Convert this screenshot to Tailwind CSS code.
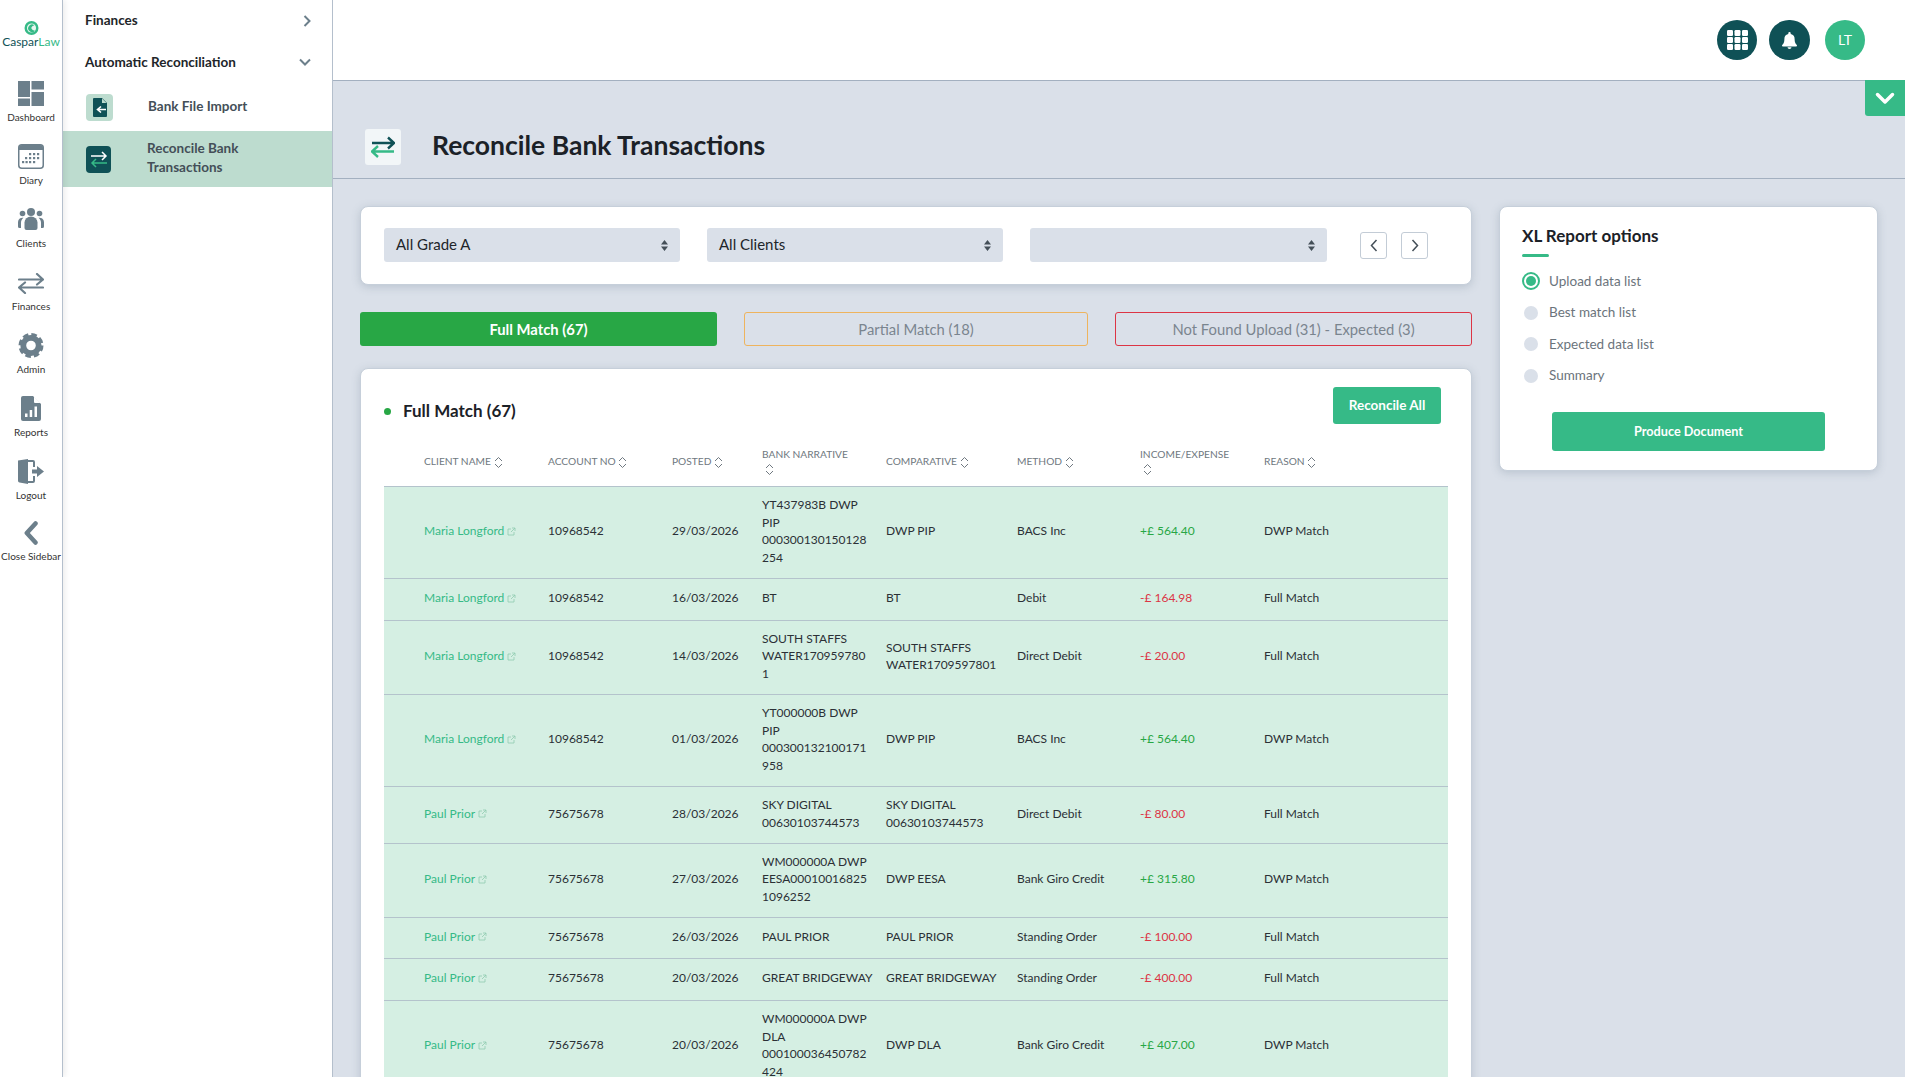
<!DOCTYPE html>
<html lang="en">
<head>
    <meta charset="UTF-8">
    <title>Reconcile Bank Transactions - CasparLaw</title>
    <script src="https://cdn.jsdelivr.net/npm/@tailwindcss/browser@4"></script>
</head>
<body class="h-screen overflow-hidden bg-[#dae0e9] font-['Lato','Noto_Sans',sans-serif] text-[#212529]">
<div class="flex h-full">

    <!-- icon rail -->
    <nav class="relative z-10 w-[63px] shrink-0 bg-white border-r border-[#b4bfcc] shadow-[2px_0_6px_rgba(0,0,0,0.08)] flex flex-col items-center text-[10px] leading-[13px] text-[#333] whitespace-nowrap">
        <svg class="mt-[21px] w-[15px] h-[14px]" viewBox="0 0 20 20">
            <circle cx="10" cy="10" r="10" fill="#36ba87"/>
            <circle cx="10" cy="10" r="6.500" fill="#e8f6f0"/>
            <path d="M14 6a5.500 5.500 0 1 0 1 8 6.500 6.500 0 0 1-5.500-4A6 6 0 0 1 14 6z" fill="#36ba87"/>
        </svg>
        <div class="text-[12px] leading-[14px] text-[#0f5156]">Caspar<span class="text-[#36ba87]">Law</span></div>

        <svg class="mt-[32px] w-[26px] h-[25px]" viewBox="0 0 26 25" fill="#6c7f8b">
            <rect width="12" height="16"/><rect y="17.500" width="12" height="7.500"/><rect x="13.500" width="12.500" height="8.500"/><rect x="13.500" y="11" width="12.500" height="14"/>
        </svg>
        <div class="mt-[5px]">Dashboard</div>

        <svg class="mt-[20px] w-[26px] h-[25px]" viewBox="0 0 26 25">
            <rect x="0.750" y="0.750" width="24.500" height="23.500" rx="3" fill="#fff" stroke="#6c7f8b" stroke-width="1.500"/>
            <path d="M1 4a3 3 0 0 1 3-3h18a3 3 0 0 1 3 3v2H1z" fill="#6c7f8b"/>
            <g fill="#6c7f8b"><rect x="11" y="9" width="2.200" height="2.200"/><rect x="15" y="9" width="2.200" height="2.200"/><rect x="19" y="9" width="2.200" height="2.200"/><rect x="7" y="13" width="2.200" height="2.200"/><rect x="11" y="13" width="2.200" height="2.200"/><rect x="15" y="13" width="2.200" height="2.200"/><rect x="19" y="13" width="2.200" height="2.200"/><rect x="4" y="17" width="2.200" height="2.200"/><rect x="7.500" y="17" width="2.200" height="2.200"/><rect x="11" y="17" width="2.200" height="2.200"/><rect x="15" y="17" width="2.200" height="2.200"/></g>
        </svg>
        <div class="mt-[5px]">Diary</div>

        <svg class="mt-[21px] w-[26px] h-[22px]" viewBox="0 0 26 22" fill="#6c7f8b">
            <circle cx="13" cy="4" r="4"/><circle cx="4.500" cy="5.500" r="2.800"/><circle cx="21.500" cy="5.500" r="2.800"/>
            <path d="M6.500 14.500a6.500 6 0 0 1 13 0V20a2 2 0 0 1-2 2h-9a2 2 0 0 1-2-2z"/>
            <path d="M5.500 9.800c-1.500 1.200-2.500 2.800-2.500 5V20H1.500A1.500 1.500 0 0 1 0 18.500V14a4.500 4.500 0 0 1 5.500-4.200zM20.500 9.800c1.500 1.200 2.500 2.800 2.500 5V20h1.500a1.500 1.500 0 0 0 1.500-1.500V14a4.500 4.500 0 0 0-5.500-4.200z"/>
        </svg>
        <div class="mt-[7px]">Clients</div>

        <svg class="mt-[23px] w-[26px] h-[21px]" viewBox="0 0 26 21" fill="none" stroke="#6c7f8b" stroke-width="2.200" stroke-linecap="round" stroke-linejoin="round">
            <path d="M1 6.500h24M19 1l6 5.500-6 5"/><path d="M25 14.500H1M7 9.500l-6 5 6 5.500"/>
        </svg>
        <div class="mt-[6px]">Finances</div>

        <svg class="mt-[20px] w-[26px] h-[25px]" viewBox="0 0 26 26">
            <circle cx="13" cy="13" r="8" fill="none" stroke="#6c7f8b" stroke-width="6"/>
            <circle cx="13" cy="13" r="11" fill="none" stroke="#6c7f8b" stroke-width="4" stroke-dasharray="5.600 3.040"/>
        </svg>
        <div class="mt-[5px]">Admin</div>

        <svg class="mt-[20px] w-[20px] h-[25px]" viewBox="0 0 20 25">
            <path d="M2 0h10l8 8v15a2 2 0 0 1-2 2H2a2 2 0 0 1-2-2V2a2 2 0 0 1 2-2z" fill="#6c7f8b"/>
            <path d="M13 0.500L19.500 7H14a1 1 0 0 1-1-1z" fill="#fff"/>
            <path d="M4 17.500h2.500V21H4zM8.700 14h2.500v7H8.700zM13.500 10.500H16V21h-2.500z" fill="#fff"/>
        </svg>
        <div class="mt-[5px]">Reports</div>

        <svg class="mt-[20px] w-[26px] h-[25px]" viewBox="0 0 26 25" fill="#6c7f8b">
            <path d="M0 1.500L10 0v25L1.500 23.500A2 2 0 0 1 0 21.500z"/>
            <path d="M10 1h5a2 2 0 0 1 2 2v5h-2V3h-5zM10 22h5v-5h2v5a2 2 0 0 1-2 2h-5z"/>
            <path d="M14 10.500h5V7l7 5.500-7 5.500v-3.500h-5z"/>
        </svg>
        <div class="mt-[5px]">Logout</div>

        <svg class="mt-[19px] w-[14px] h-[24px]" viewBox="0 0 14 24" fill="none" stroke="#6c7f8b" stroke-width="4.500" stroke-linecap="round" stroke-linejoin="round">
            <path d="M11.500 2.500L2.800 12l8.700 9.500"/>
        </svg>
        <div class="mt-[5px]">Close Sidebar</div>
    </nav>

    <!-- section sidebar -->
    <aside class="w-[270px] shrink-0 bg-white border-r border-[#b4bfcc] text-[13.500px]">
        <div class="h-[41px] pl-[22px] pr-[21px] flex items-center justify-between font-bold text-[#212529]">
            <span>Finances</span>
            <svg class="w-[8px] h-[12px]" viewBox="0 0 8 12" fill="none" stroke="#6c7f8b" stroke-width="2"><path d="M1.500 1l5 5-5 5"/></svg>
        </div>
        <div class="h-[42px] pl-[22px] pr-[21px] flex items-center justify-between font-bold text-[#212529]">
            <span>Automatic Reconciliation</span>
            <svg class="w-[12px] h-[8px]" viewBox="0 0 12 8" fill="none" stroke="#6c7f8b" stroke-width="2"><path d="M1 1.500l5 5 5-5"/></svg>
        </div>
        <div class="h-[48px] pl-[23px] flex items-center font-bold text-[#444f58]">
            <span class="w-[27px] h-[27px] rounded-[4px] bg-[#bddccf] flex items-center justify-center">
                <svg class="w-[14px] h-[19px]" viewBox="0 0 14 19">
                    <path d="M1 0h8l5 5v13a1 1 0 0 1-1 1H1a1 1 0 0 1-1-1V1a1 1 0 0 1 1-1z" fill="#0f5156"/>
                    <path d="M9 0.500L13.500 5H9z" fill="#bddccf"/>
                    <path d="M13 11.500H5M8 8.500l-3.500 3 3.500 3" fill="none" stroke="#fff" stroke-width="1.600"/>
                </svg>
            </span>
            <span class="ml-[35px] mb-[1px]">Bank File Import</span>
        </div>
        <div class="h-[56px] pl-[23px] flex items-center bg-[#bddccf] font-bold text-[#444f58] leading-[19px]">
            <span class="w-[25px] h-[27px] rounded-[4px] bg-[#0f5156] flex items-center justify-center">
                <svg class="w-[18px] h-[19px]" viewBox="0 0 18 19" fill="none" stroke-width="1.500">
                    <path d="M1 6h15M12 2l4 4-4 4" stroke="#fff"/>
                    <path d="M17 13H2M6 9l-4 4 4 4" stroke="#36ba87"/>
                </svg>
            </span>
            <span class="ml-[36px] mb-[3px]">Reconcile Bank<br>Transactions</span>
        </div>
    </aside>

    <div class="flex-1 min-w-0 flex flex-col">
        <!-- top bar -->
        <header class="relative h-[81px] shrink-0 bg-white border-b border-[#a3b0c0] flex items-center justify-end pr-[40px]">
            <span class="w-[40px] h-[40px] rounded-full bg-[#0f5156] flex items-center justify-center">
                <svg class="w-[21px] h-[20px]" viewBox="0 0 21 20" fill="#fff">
                    <rect width="6" height="6" rx="1.200"/><rect x="7.500" width="6" height="6" rx="1.200"/><rect x="15" width="6" height="6" rx="1.200"/>
                    <rect y="7" width="6" height="6" rx="1.200"/><rect x="7.500" y="7" width="6" height="6" rx="1.200"/><rect x="15" y="7" width="6" height="6" rx="1.200"/>
                    <rect y="14" width="6" height="6" rx="1.200"/><rect x="7.500" y="14" width="6" height="6" rx="1.200"/><rect x="15" y="14" width="6" height="6" rx="1.200"/>
                </svg>
            </span>
            <span class="ml-[12px] w-[41px] h-[40px] rounded-full bg-[#0f5156] flex items-center justify-center">
                <svg class="w-[15px] h-[17px]" viewBox="0 0 15 17" fill="#fff">
                    <path d="M7.500 0a1.200 1.200 0 0 1 1.200 1.200v.7A5 5 0 0 1 12.600 7c0 3.500 1 4.800 2 5.800.3.300.4.700.4 1 0 .4-.4.700-.9.700H.9c-.5 0-.9-.3-.9-.7 0-.3.100-.7.400-1 1-1 2-2.300 2-5.800a5 5 0 0 1 3.900-5.100v-.7A1.200 1.200 0 0 1 7.500 0z"/>
                    <path d="M5.500 15.300h4a2 1.700 0 0 1-4 0z"/>
                </svg>
            </span>
            <span class="ml-[15px] w-[40px] h-[40px] rounded-full bg-[#36ba87] flex items-center justify-center text-white text-[14px] pb-[2px]">LT</span>
            <span class="absolute right-0 top-[80px] w-[40px] h-[36px] rounded-bl-[3px] bg-[#36ba87] flex items-center justify-center">
                <svg class="w-[20px] h-[13px]" viewBox="0 0 20 13" fill="none" stroke="#fff" stroke-width="3.500" stroke-linecap="round" stroke-linejoin="round"><path d="M2.500 2.500L10 10l7.500-7.500"/></svg>
            </span>
        </header>

        <!-- page title -->
        <div class="h-[98px] shrink-0 border-b border-[#a3b0c0] pl-[32px] pt-[48px] flex items-start">
            <span class="w-[36px] h-[36px] rounded-[3px] bg-[#f2f6f8] flex items-center justify-center">
                <svg class="w-[24px] h-[24px]" viewBox="0 0 24 24" fill="none" stroke-width="2.400">
                    <path d="M1 8h22M17 2.500L23 8l-6 5.500" stroke="#0f5156"/>
                    <path d="M23 16.500H1M7 11l-6 5.500L7 22" stroke="#36ba87"/>
                </svg>
            </span>
            <h1 class="ml-[31px] -mt-[2px] text-[26.500px] leading-[36px] font-bold text-[#1b2127]">Reconcile Bank Transactions</h1>
        </div>

        <div class="flex-1 min-h-0 pl-[27px] pt-[27px] flex gap-[27px] items-start">
            <div class="w-[1112px] shrink-0">
                <!-- filters -->
                <div class="h-[79px] rounded-[8px] bg-white border border-[#c6cfda] shadow-[0_2px_8px_rgba(90,110,130,0.25)] pl-[23px] pt-[21px] flex items-start text-[15px]">
                    <div class="w-[296px] h-[34px] rounded-[3px] bg-[#dae0e9] px-[12px] pb-[2px] flex items-center justify-between">
                        <span>All Grade A</span>
                        <svg class="w-[7px] h-[11px] mt-[2px]" viewBox="0 0 7 11" fill="#444f58"><path d="M3.500 0L7 4.500H0zM3.500 11L0 6.500h7z"/></svg>
                    </div>
                    <div class="ml-[27px] w-[296px] h-[34px] rounded-[3px] bg-[#dae0e9] px-[12px] pb-[2px] flex items-center justify-between">
                        <span>All Clients</span>
                        <svg class="w-[7px] h-[11px] mt-[2px]" viewBox="0 0 7 11" fill="#444f58"><path d="M3.500 0L7 4.500H0zM3.500 11L0 6.500h7z"/></svg>
                    </div>
                    <div class="ml-[27px] w-[297px] h-[34px] rounded-[3px] bg-[#dae0e9] px-[12px] flex items-center justify-end">
                        <svg class="w-[7px] h-[11px]" viewBox="0 0 7 11" fill="#444f58"><path d="M3.500 0L7 4.500H0zM3.500 11L0 6.500h7z"/></svg>
                    </div>
                    <button class="ml-[33px] mt-[4px] w-[27px] h-[27px] rounded-[3px] border border-[#c3ccd6] bg-white flex items-center justify-center">
                        <svg class="w-[8px] h-[13px]" viewBox="0 0 8 13" fill="none" stroke="#444f58" stroke-width="1.500"><path d="M6.500 1L1.500 6.500l5 5.500"/></svg>
                    </button>
                    <button class="ml-[14px] mt-[4px] w-[27px] h-[27px] rounded-[3px] border border-[#c3ccd6] bg-white flex items-center justify-center">
                        <svg class="w-[8px] h-[13px]" viewBox="0 0 8 13" fill="none" stroke="#444f58" stroke-width="1.500"><path d="M1.500 1l5 5.500-5 5.500"/></svg>
                    </button>
                </div>

                <!-- match tabs -->
                <div class="mt-[27px] flex gap-[27px] text-[14.800px] text-[#7a858f]">
                    <button class="w-[357px] h-[34px] rounded-[3px] bg-[#28a745] text-white font-bold">Full Match (67)</button>
                    <button class="w-[344px] h-[34px] rounded-[3px] border border-[#eeb45e]">Partial Match (18)</button>
                    <button class="w-[357px] h-[34px] rounded-[3px] border border-[#dc3545]">Not Found Upload (31) - Expected (3)</button>
                </div>

                <!-- transactions -->
                <div class="mt-[22px] rounded-t-[8px] bg-white border border-[#c6cfda] shadow-[0_2px_8px_rgba(90,110,130,0.25)] pl-[23px] pr-[23px] pt-[18px]">
                    <div class="h-[37px] flex items-start justify-between pr-[7px]">
                        <div class="mt-[12px] flex items-center">
                            <span class="w-[7px] h-[7px] rounded-full bg-[#28a745]"></span>
                            <h2 class="ml-[12px] text-[17px] leading-[24px] font-bold text-[#1b2127]">Full Match (67)</h2>
                        </div>
                        <button class="w-[108px] h-[37px] rounded-[3px] bg-[#36ba87] text-white text-[13.500px] font-bold">Reconcile All</button>
                    </div>
                    <table class="mt-[12px] w-[1064px] table-fixed border-collapse text-[12px] leading-[17.500px] text-[#2b3036]">
                        <colgroup>
                            <col class="w-[164px]"><col class="w-[124px]"><col class="w-[90px]"><col class="w-[124px]"><col class="w-[131px]"><col class="w-[123px]"><col class="w-[124px]"><col>
                        </colgroup>
                        <thead>
                            <tr class="h-[50px] border-b border-[#b4c3cc] text-left text-[10.200px] leading-[14px] text-[#6f7880] [&_th]:pt-[1px]">
                                <th class="pl-[40px] font-normal">CLIENT NAME <svg class="inline w-[9px] h-[13px]" viewBox="0 0 9 13" fill="none" stroke="#6f7880"><path d="M1 5l3.500-3.500L8 5M1 8l3.500 3.500L8 8"/></svg></th>
                                <th class="font-normal">ACCOUNT NO <svg class="inline w-[9px] h-[13px]" viewBox="0 0 9 13" fill="none" stroke="#6f7880"><path d="M1 5l3.500-3.500L8 5M1 8l3.500 3.500L8 8"/></svg></th>
                                <th class="font-normal">POSTED <svg class="inline w-[9px] h-[13px]" viewBox="0 0 9 13" fill="none" stroke="#6f7880"><path d="M1 5l3.500-3.500L8 5M1 8l3.500 3.500L8 8"/></svg></th>
                                <th class="font-normal">BANK NARRATIVE<br><svg class="inline ml-[3px] w-[9px] h-[13px]" viewBox="0 0 9 13" fill="none" stroke="#6f7880"><path d="M1 5l3.500-3.500L8 5M1 8l3.500 3.500L8 8"/></svg></th>
                                <th class="font-normal">COMPARATIVE <svg class="inline w-[9px] h-[13px]" viewBox="0 0 9 13" fill="none" stroke="#6f7880"><path d="M1 5l3.500-3.500L8 5M1 8l3.500 3.500L8 8"/></svg></th>
                                <th class="font-normal">METHOD <svg class="inline w-[9px] h-[13px]" viewBox="0 0 9 13" fill="none" stroke="#6f7880"><path d="M1 5l3.500-3.500L8 5M1 8l3.500 3.500L8 8"/></svg></th>
                                <th class="font-normal">INCOME/EXPENSE<br><svg class="inline ml-[3px] w-[9px] h-[13px]" viewBox="0 0 9 13" fill="none" stroke="#6f7880"><path d="M1 5l3.500-3.500L8 5M1 8l3.500 3.500L8 8"/></svg></th>
                                <th class="font-normal">REASON <svg class="inline w-[9px] h-[13px]" viewBox="0 0 9 13" fill="none" stroke="#6f7880"><path d="M1 5l3.500-3.500L8 5M1 8l3.500 3.500L8 8"/></svg></th>
                            </tr>
                        </thead>
                        <tbody class="bg-[#d5efe3] [&_td]:pb-[2px]">
                            <tr class="h-[92px] border-b border-[#b4c3cc]">
                                <td class="pl-[40px] text-[#36ba87]">Maria Longford <svg class="inline w-[9px] h-[9px] align-[-0.5px]" viewBox="0 0 9 9" fill="none" stroke="#8fcbb0" stroke-width="0.800"><path d="M7 5v3H1V2h3M5 1h3v3M8 1L4 5"/></svg></td>
                                <td>10968542</td><td>29/03/2026</td>
                                <td>YT437983B DWP<br>PIP<br>000300130150128<br>254</td>
                                <td>DWP PIP</td><td>BACS Inc</td><td class="text-[#28a745]">+£ 564.40</td><td>DWP Match</td>
                            </tr>
                            <tr class="h-[42px] border-b border-[#b4c3cc]">
                                <td class="pl-[40px] text-[#36ba87]">Maria Longford <svg class="inline w-[9px] h-[9px] align-[-0.5px]" viewBox="0 0 9 9" fill="none" stroke="#8fcbb0" stroke-width="0.800"><path d="M7 5v3H1V2h3M5 1h3v3M8 1L4 5"/></svg></td>
                                <td>10968542</td><td>16/03/2026</td>
                                <td>BT</td>
                                <td>BT</td><td>Debit</td><td class="text-[#dc3545]">-£ 164.98</td><td>Full Match</td>
                            </tr>
                            <tr class="h-[74px] border-b border-[#b4c3cc]">
                                <td class="pl-[40px] text-[#36ba87]">Maria Longford <svg class="inline w-[9px] h-[9px] align-[-0.5px]" viewBox="0 0 9 9" fill="none" stroke="#8fcbb0" stroke-width="0.800"><path d="M7 5v3H1V2h3M5 1h3v3M8 1L4 5"/></svg></td>
                                <td>10968542</td><td>14/03/2026</td>
                                <td>SOUTH STAFFS<br>WATER170959780<br>1</td>
                                <td>SOUTH STAFFS<br>WATER1709597801</td><td>Direct Debit</td><td class="text-[#dc3545]">-£ 20.00</td><td>Full Match</td>
                            </tr>
                            <tr class="h-[92px] border-b border-[#b4c3cc]">
                                <td class="pl-[40px] text-[#36ba87]">Maria Longford <svg class="inline w-[9px] h-[9px] align-[-0.5px]" viewBox="0 0 9 9" fill="none" stroke="#8fcbb0" stroke-width="0.800"><path d="M7 5v3H1V2h3M5 1h3v3M8 1L4 5"/></svg></td>
                                <td>10968542</td><td>01/03/2026</td>
                                <td>YT000000B DWP<br>PIP<br>000300132100171<br>958</td>
                                <td>DWP PIP</td><td>BACS Inc</td><td class="text-[#28a745]">+£ 564.40</td><td>DWP Match</td>
                            </tr>
                            <tr class="h-[57px] border-b border-[#b4c3cc]">
                                <td class="pl-[40px] text-[#36ba87]">Paul Prior <svg class="inline w-[9px] h-[9px] align-[-0.5px]" viewBox="0 0 9 9" fill="none" stroke="#8fcbb0" stroke-width="0.800"><path d="M7 5v3H1V2h3M5 1h3v3M8 1L4 5"/></svg></td>
                                <td>75675678</td><td>28/03/2026</td>
                                <td>SKY DIGITAL<br>00630103744573</td>
                                <td>SKY DIGITAL<br>00630103744573</td><td>Direct Debit</td><td class="text-[#dc3545]">-£ 80.00</td><td>Full Match</td>
                            </tr>
                            <tr class="h-[74px] border-b border-[#b4c3cc]">
                                <td class="pl-[40px] text-[#36ba87]">Paul Prior <svg class="inline w-[9px] h-[9px] align-[-0.5px]" viewBox="0 0 9 9" fill="none" stroke="#8fcbb0" stroke-width="0.800"><path d="M7 5v3H1V2h3M5 1h3v3M8 1L4 5"/></svg></td>
                                <td>75675678</td><td>27/03/2026</td>
                                <td>WM000000A DWP<br>EESA00010016825<br>1096252</td>
                                <td>DWP EESA</td><td>Bank Giro Credit</td><td class="text-[#28a745]">+£ 315.80</td><td>DWP Match</td>
                            </tr>
                            <tr class="h-[41px] border-b border-[#b4c3cc]">
                                <td class="pl-[40px] text-[#36ba87]">Paul Prior <svg class="inline w-[9px] h-[9px] align-[-0.5px]" viewBox="0 0 9 9" fill="none" stroke="#8fcbb0" stroke-width="0.800"><path d="M7 5v3H1V2h3M5 1h3v3M8 1L4 5"/></svg></td>
                                <td>75675678</td><td>26/03/2026</td>
                                <td>PAUL PRIOR</td>
                                <td>PAUL PRIOR</td><td>Standing Order</td><td class="text-[#dc3545]">-£ 100.00</td><td>Full Match</td>
                            </tr>
                            <tr class="h-[42px] border-b border-[#b4c3cc]">
                                <td class="pl-[40px] text-[#36ba87]">Paul Prior <svg class="inline w-[9px] h-[9px] align-[-0.5px]" viewBox="0 0 9 9" fill="none" stroke="#8fcbb0" stroke-width="0.800"><path d="M7 5v3H1V2h3M5 1h3v3M8 1L4 5"/></svg></td>
                                <td>75675678</td><td>20/03/2026</td>
                                <td>GREAT BRIDGEWAY</td>
                                <td>GREAT BRIDGEWAY</td><td>Standing Order</td><td class="text-[#dc3545]">-£ 400.00</td><td>Full Match</td>
                            </tr>
                            <tr class="h-[92px] border-b border-[#b4c3cc]">
                                <td class="pl-[40px] text-[#36ba87]">Paul Prior <svg class="inline w-[9px] h-[9px] align-[-0.5px]" viewBox="0 0 9 9" fill="none" stroke="#8fcbb0" stroke-width="0.800"><path d="M7 5v3H1V2h3M5 1h3v3M8 1L4 5"/></svg></td>
                                <td>75675678</td><td>20/03/2026</td>
                                <td>WM000000A DWP<br>DLA<br>000100036450782<br>424</td>
                                <td>DWP DLA</td><td>Bank Giro Credit</td><td class="text-[#28a745]">+£ 407.00</td><td>DWP Match</td>
                            </tr>
                        </tbody>
                    </table>
                </div>
            </div>

            <!-- report options -->
            <div class="w-[379px] h-[265px] shrink-0 rounded-[8px] bg-white border border-[#c6cfda] shadow-[0_2px_8px_rgba(90,110,130,0.25)] pl-[22px] pt-[18px]">
                <h3 class="text-[17px] leading-[22px] font-bold text-[#1b2127]">XL Report options</h3>
                <div class="mt-[7px] w-[27px] h-[3px] rounded-[2px] bg-[#36ba87]"></div>
                <ul class="mt-[8px] text-[13.500px] text-[#6b747c]">
                    <li class="h-[32px] flex items-center"><span class="w-[18px] h-[18px] rounded-full border-2 border-[#36ba87] bg-white flex items-center justify-center"><span class="w-[10px] h-[10px] rounded-full bg-[#36ba87]"></span></span><span class="ml-[9px]">Upload data list</span></li>
                    <li class="h-[31px] flex items-center"><span class="ml-[2px] w-[14px] h-[14px] rounded-full bg-[#dae0e9]"></span><span class="ml-[11px]">Best match list</span></li>
                    <li class="h-[32px] flex items-center"><span class="ml-[2px] w-[14px] h-[14px] rounded-full bg-[#dae0e9]"></span><span class="ml-[11px]">Expected data list</span></li>
                    <li class="h-[31px] flex items-center"><span class="ml-[2px] w-[14px] h-[14px] rounded-full bg-[#dae0e9]"></span><span class="ml-[11px]">Summary</span></li>
                </ul>
                <button class="mt-[21px] ml-[30px] w-[273px] h-[39px] rounded-[3px] bg-[#36ba87] text-white text-[12.700px] font-bold">Produce Document</button>
            </div>
        </div>
    </div>
</div>
</body>
</html>
